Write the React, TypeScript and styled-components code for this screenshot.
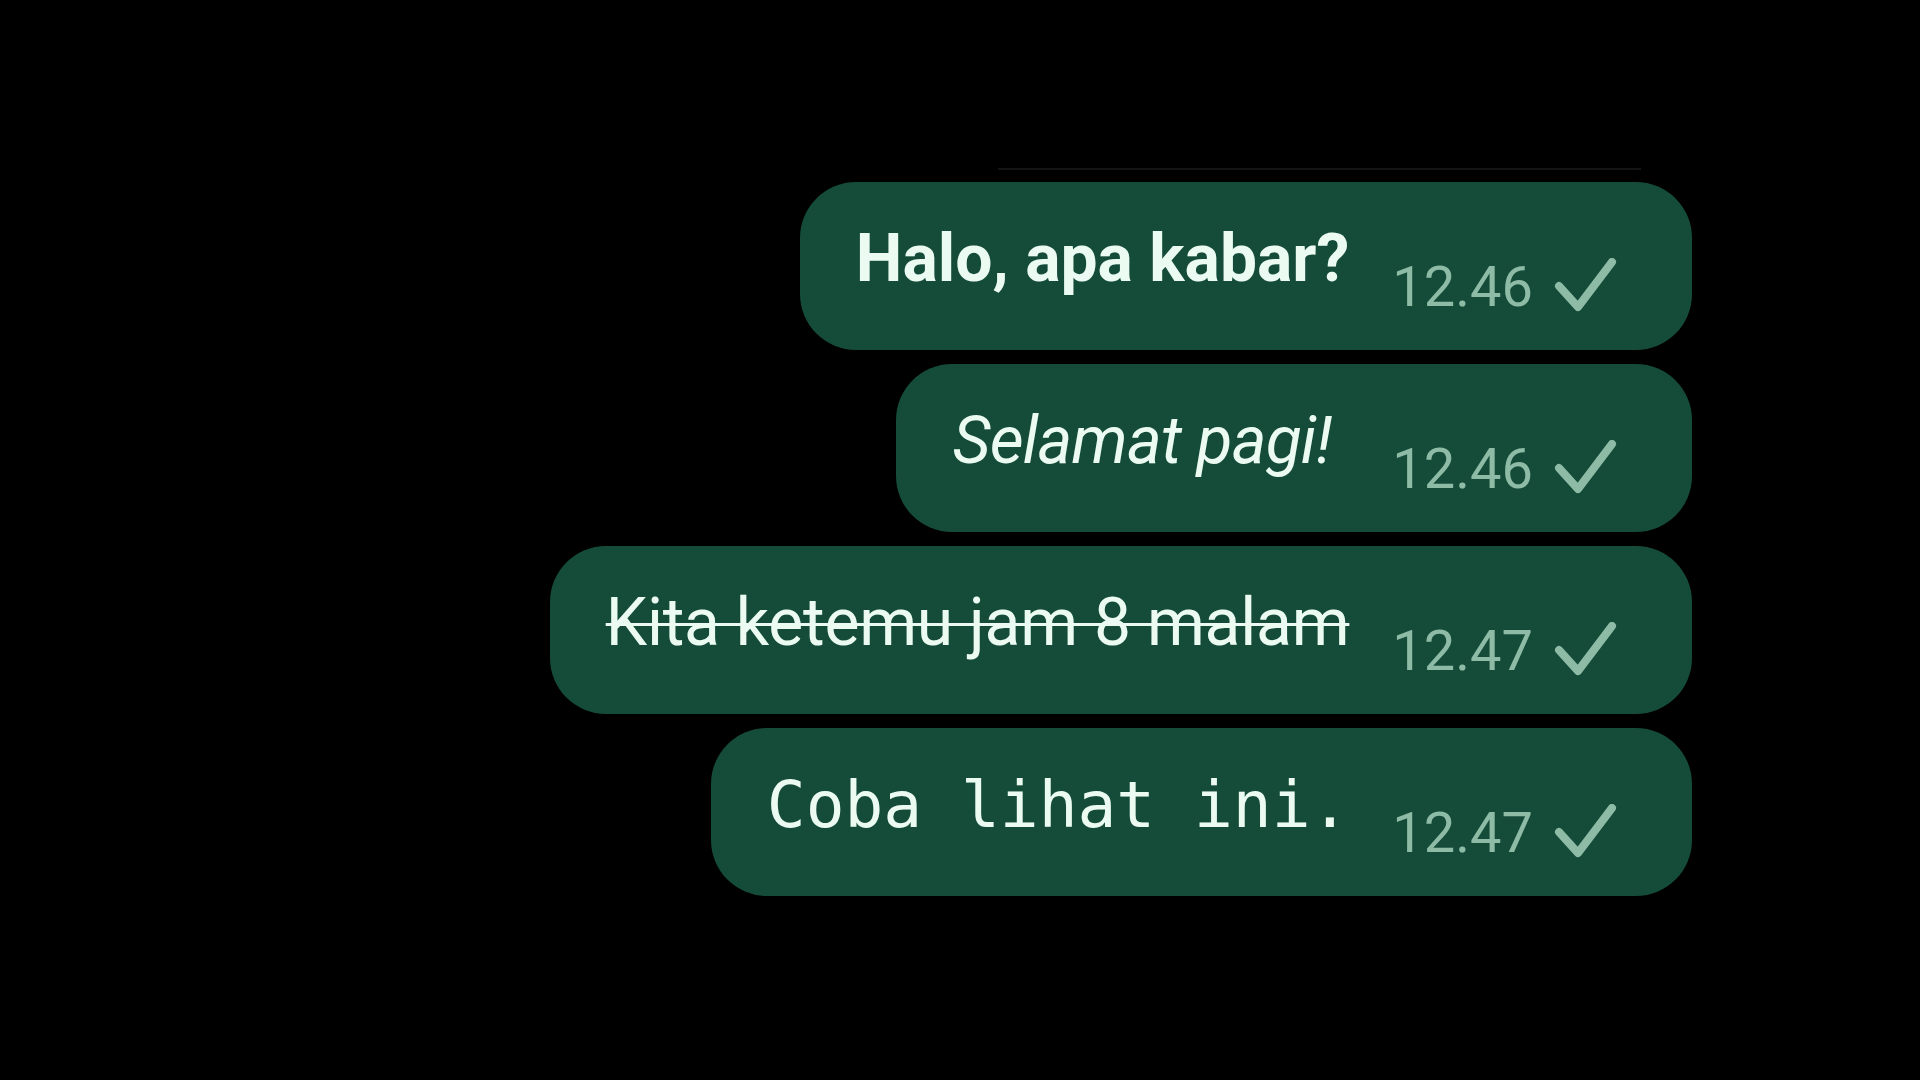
import React from 'react';
import styled, { createGlobalStyle } from 'styled-components';

const GlobalStyle = createGlobalStyle`
  html, body {
    margin: 0;
    padding: 0;
    background: #000;
  }
  body {
    width: 1920px;
    height: 1080px;
    overflow: hidden;
    font-family: Roboto, 'Noto Sans', sans-serif;
  }
`;

const Screen = styled.main`
  box-sizing: border-box;
  width: 1920px;
  height: 1080px;
  background: #000;
  display: flex;
  flex-direction: column;
  align-items: flex-end;
  padding: 168px 228px 0 0;
`;

const Remnant = styled.div`
  width: 643px;
  height: 2px;
  margin-right: 51px;
  margin-bottom: 12px;
  background: #141414;
`;

const Thread = styled.div`
  display: flex;
  flex-direction: column;
  align-items: flex-end;
  gap: 14px;
`;

const Bubble = styled.div`
  box-sizing: border-box;
  height: 168px;
  display: flex;
  align-items: flex-start;
  gap: 43px;
  padding: 0 73px 0 56px;
  border-radius: 56px;
  background: #154c39;
`;

type Variant = 'bold' | 'italic' | 'strike' | 'mono';

const spacing: Record<Variant, string> = {
  bold: '0',
  italic: '-0.8px',
  strike: '-0.25px',
  mono: '0',
};

const Text = styled.span<{ $variant: Variant }>`
  margin-top: 44px;
  margin-right: ${(p) => (p.$variant === 'italic' ? '18px' : '0')};
  font-size: ${(p) => (p.$variant === 'mono' ? '64.5px' : '66px')};
  line-height: 66px;
  color: #ebfbf2;
  white-space: pre;
  letter-spacing: ${(p) => spacing[p.$variant]};
  font-family: ${(p) =>
    p.$variant === 'mono'
      ? "'DejaVu Sans Mono', 'Liberation Mono', monospace"
      : "Roboto, 'Noto Sans', sans-serif"};
  font-weight: ${(p) => (p.$variant === 'bold' ? 700 : 400)};
  font-style: ${(p) => (p.$variant === 'italic' ? 'italic' : 'normal')};
  text-decoration: ${(p) => (p.$variant === 'strike' ? 'line-through' : 'none')};
  text-decoration-thickness: 3px;
`;

const Meta = styled.div`
  margin-top: 77px;
  display: flex;
  align-items: flex-start;
  gap: 20px;
`;

const Time = styled.span`
  font-size: 56px;
  line-height: 56px;
  color: #8dbba6;
`;

const Tick = styled.svg`
  display: block;
  width: 66px;
  height: 56px;
  margin-top: -1px;
`;

const Check = () => (
  <Tick viewBox="0 0 66 56">
    <path
      d="M6 28 L25 49 L59 4"
      fill="none"
      stroke="#8dbba6"
      strokeWidth="8"
      strokeLinecap="round"
      strokeLinejoin="round"
    />
  </Tick>
);

const messages: { text: string; time: string; variant: Variant }[] = [
  { text: 'Halo, apa kabar?', time: '12.46', variant: 'bold' },
  { text: 'Selamat pagi!', time: '12.46', variant: 'italic' },
  { text: 'Kita ketemu jam 8 malam', time: '12.47', variant: 'strike' },
  { text: 'Coba lihat ini.', time: '12.47', variant: 'mono' },
];

const App: React.FC = () => {
  return (
    <>
      <GlobalStyle />
      <Screen>
        <Remnant />
        <Thread>
          {messages.map((m) => (
            <Bubble key={m.text}>
              <Text $variant={m.variant}>{m.text}</Text>
              <Meta>
                <Time>{m.time}</Time>
                <Check />
              </Meta>
            </Bubble>
          ))}
        </Thread>
      </Screen>
    </>
  );
};

export default App;
